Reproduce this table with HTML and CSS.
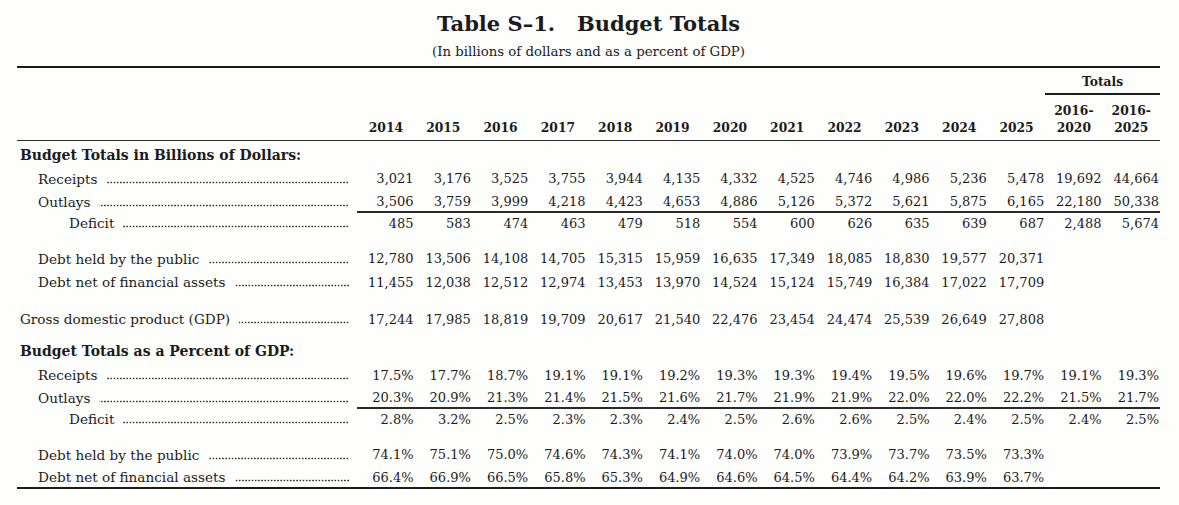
FILE: index.html
```html
<!DOCTYPE html>
<html lang="en">
<head>
<meta charset="utf-8">
<title>Table S-1. Budget Totals</title>
<link rel="stylesheet" href="styles.css">
</head>
<body>
<div class="page">
  <div class="titles">
    <h1 class="title">Table S–1.&nbsp;&nbsp;&nbsp;Budget Totals</h1>
    <p class="subtitle">(In billions of dollars and as a percent of GDP)</p>
  </div>
  <table class="budget">
    <colgroup>
      <col class="c-label">
      <col class="c-num"><col class="c-num"><col class="c-num"><col class="c-num"><col class="c-num"><col class="c-num"><col class="c-num">
      <col class="c-num"><col class="c-num"><col class="c-num"><col class="c-num"><col class="c-num"><col class="c-num"><col class="c-num">
    </colgroup>
    <thead>
      <tr class="h1">
        <th></th>
        <th></th><th></th><th></th><th></th><th></th><th></th>
        <th></th><th></th><th></th><th></th><th></th><th></th>
        <th class="totals" colspan="2">Totals</th>
      </tr>
      <tr class="h2">
        <th></th>
        <th>2014</th><th>2015</th><th>2016</th><th>2017</th><th>2018</th><th>2019</th>
        <th>2020</th><th>2021</th><th>2022</th><th>2023</th><th>2024</th><th>2025</th>
        <th>2016-<br>2020</th><th>2016-<br>2025</th>
      </tr>
    </thead>
    <tbody>
      <tr class="sec first"><td class="lbl l0" colspan="15"><b>Budget Totals in Billions of Dollars:</b></td></tr>
      <tr class="r24">
        <td class="lbl l1"><div class="lead"><span>Receipts</span><span class="dots"></span></div></td>
        <td>3,021</td><td>3,176</td><td>3,525</td><td>3,755</td><td>3,944</td><td>4,135</td><td>4,332</td>
        <td>4,525</td><td>4,746</td><td>4,986</td><td>5,236</td><td>5,478</td><td>19,692</td><td>44,664</td>
      </tr>
      <tr class="ul">
        <td class="lbl l1"><div class="lead"><span>Outlays</span><span class="dots"></span></div></td>
        <td>3,506</td><td>3,759</td><td>3,999</td><td>4,218</td><td>4,423</td><td>4,653</td><td>4,886</td>
        <td>5,126</td><td>5,372</td><td>5,621</td><td>5,875</td><td>6,165</td><td>22,180</td><td>50,338</td>
      </tr>
      <tr class="r21">
        <td class="lbl l2"><div class="lead"><span>Deficit</span><span class="dots"></span></div></td>
        <td>485</td><td>583</td><td>474</td><td>463</td><td>479</td><td>518</td><td>554</td>
        <td>600</td><td>626</td><td>635</td><td>639</td><td>687</td><td>2,488</td><td>5,674</td>
      </tr>
      <tr class="gap g13"><td colspan="15"></td></tr>
      <tr class="r24">
        <td class="lbl l1"><div class="lead"><span>Debt held by the public</span><span class="dots"></span></div></td>
        <td>12,780</td><td>13,506</td><td>14,108</td><td>14,705</td><td>15,315</td><td>15,959</td><td>16,635</td>
        <td>17,349</td><td>18,085</td><td>18,830</td><td>19,577</td><td>20,371</td><td></td><td></td>
      </tr>
      <tr>
        <td class="lbl l1"><div class="lead"><span>Debt net of financial assets</span><span class="dots"></span></div></td>
        <td>11,455</td><td>12,038</td><td>12,512</td><td>12,974</td><td>13,453</td><td>13,970</td><td>14,524</td>
        <td>15,124</td><td>15,749</td><td>16,384</td><td>17,022</td><td>17,709</td><td></td><td></td>
      </tr>
      <tr class="gap g14"><td colspan="15"></td></tr>
      <tr>
        <td class="lbl l0"><div class="lead"><span>Gross domestic product (GDP)</span><span class="dots"></span></div></td>
        <td>17,244</td><td>17,985</td><td>18,819</td><td>19,709</td><td>20,617</td><td>21,540</td><td>22,476</td>
        <td>23,454</td><td>24,474</td><td>25,539</td><td>26,649</td><td>27,808</td><td></td><td></td>
      </tr>
      <tr class="gap g8"><td colspan="15"></td></tr>
      <tr class="sec r25"><td class="lbl l0" colspan="15"><b>Budget Totals as a Percent of GDP:</b></td></tr>
      <tr>
        <td class="lbl l1"><div class="lead"><span>Receipts</span><span class="dots"></span></div></td>
        <td>17.5%</td><td>17.7%</td><td>18.7%</td><td>19.1%</td><td>19.1%</td><td>19.2%</td><td>19.3%</td>
        <td>19.3%</td><td>19.4%</td><td>19.5%</td><td>19.6%</td><td>19.7%</td><td>19.1%</td><td>19.3%</td>
      </tr>
      <tr class="ul">
        <td class="lbl l1"><div class="lead"><span>Outlays</span><span class="dots"></span></div></td>
        <td>20.3%</td><td>20.9%</td><td>21.3%</td><td>21.4%</td><td>21.5%</td><td>21.6%</td><td>21.7%</td>
        <td>21.9%</td><td>21.9%</td><td>22.0%</td><td>22.0%</td><td>22.2%</td><td>21.5%</td><td>21.7%</td>
      </tr>
      <tr class="r21">
        <td class="lbl l2"><div class="lead"><span>Deficit</span><span class="dots"></span></div></td>
        <td>2.8%</td><td>3.2%</td><td>2.5%</td><td>2.3%</td><td>2.3%</td><td>2.4%</td><td>2.5%</td>
        <td>2.6%</td><td>2.6%</td><td>2.5%</td><td>2.4%</td><td>2.5%</td><td>2.4%</td><td>2.5%</td>
      </tr>
      <tr class="gap g14"><td colspan="15"></td></tr>
      <tr class="r22">
        <td class="lbl l1"><div class="lead"><span>Debt held by the public</span><span class="dots"></span></div></td>
        <td>74.1%</td><td>75.1%</td><td>75.0%</td><td>74.6%</td><td>74.3%</td><td>74.1%</td><td>74.0%</td>
        <td>74.0%</td><td>73.9%</td><td>73.7%</td><td>73.5%</td><td>73.3%</td><td></td><td></td>
      </tr>
      <tr class="last">
        <td class="lbl l1"><div class="lead"><span>Debt net of financial assets</span><span class="dots"></span></div></td>
        <td>66.4%</td><td>66.9%</td><td>66.5%</td><td>65.8%</td><td>65.3%</td><td>64.9%</td><td>64.6%</td>
        <td>64.5%</td><td>64.4%</td><td>64.2%</td><td>63.9%</td><td>63.7%</td><td></td><td></td>
      </tr>
    </tbody>
  </table>
</div>
</body>
</html>
```

FILE: styles.css
```css
* { box-sizing: border-box; }

html, body {
  margin: 0;
  padding: 0;
  background: #fefefd;
}

body {
  font-family: "DejaVu Serif", "Liberation Serif", serif;
  color: #1b1b1b;
  font-size: 13px;
}

.page {
  padding: 11px 19px 0 17px;
  width: 1179px;
}

.titles {
  width: 1143px;
  text-align: center;
}

.title {
  margin: 0;
  font-size: 21px;
  line-height: 26px;
  font-weight: bold;
  white-space: pre;
}

.subtitle {
  margin: 7px 0 0;
  font-size: 13.3px;
  line-height: 16px;
}

.budget {
  margin-top: 6px;
  width: 1143px;
  table-layout: fixed;
  border-collapse: separate;
  border-spacing: 0;
  border-top: 2px solid #1b1b1b;
}

.c-label { width: 340px; }
.c-num { width: 57.3px; }

.budget th {
  font-weight: bold;
  font-size: 12.3px;
  padding: 0;
  text-align: center;
}

.h1 th {
  line-height: 22px;
  vertical-align: top;
  padding-top: 3px;
}

.h1 th.totals {
  border-bottom: 2px solid #1b1b1b;
}

.h2 th {
  vertical-align: bottom;
  line-height: 17px;
  padding: 7px 0 4px;
  border-bottom: 1px solid #2a2a2a;
}

.budget td {
  padding: 0 1px 0 0;
  line-height: 23px;
  text-align: right;
  white-space: nowrap;
  vertical-align: top;
}

.budget td.lbl {
  text-align: left;
  padding-right: 0;
  font-size: 13.6px;
}

.budget tr.sec.first td { padding-top: 3px; }

.budget tr.r24 td { line-height: 24px; }
.budget tr.r25 td { line-height: 25px; }
.budget tr.r21 td { line-height: 21px; }
.budget tr.r22 td { line-height: 22px; }

.l0 { padding-left: 3px !important; }
.l1 { padding-left: 21px !important; }
.l2 { padding-left: 52px !important; }

.sec b { font-size: 14px; }

.lead {
  display: flex;
  align-items: baseline;
}

.dots {
  flex: 1;
  height: 3px;
  margin: 0 8px 0 9px;
  background-image: radial-gradient(circle at center, #2a2a2a 0.75px, transparent 1.15px);
  background-size: 3.2px 3px;
  background-repeat: repeat-x;
  background-position: right bottom;
}

.budget tr.ul td { line-height: 18px; padding-top: 2px; }
.budget tr.ul td:not(.lbl) { border-bottom: 2px solid #2a2a2a; }

.budget tr.last td {
  line-height: 19px;
  padding-top: 2px;
  border-bottom: 2px solid #1b1b1b;
}

.budget tr.gap td { height: 12px; line-height: 0; padding: 0; }
.budget tr.g13 td { height: 13px; }
.budget tr.g14 td { height: 14px; }
.budget tr.g8 td { height: 8px; }
```
